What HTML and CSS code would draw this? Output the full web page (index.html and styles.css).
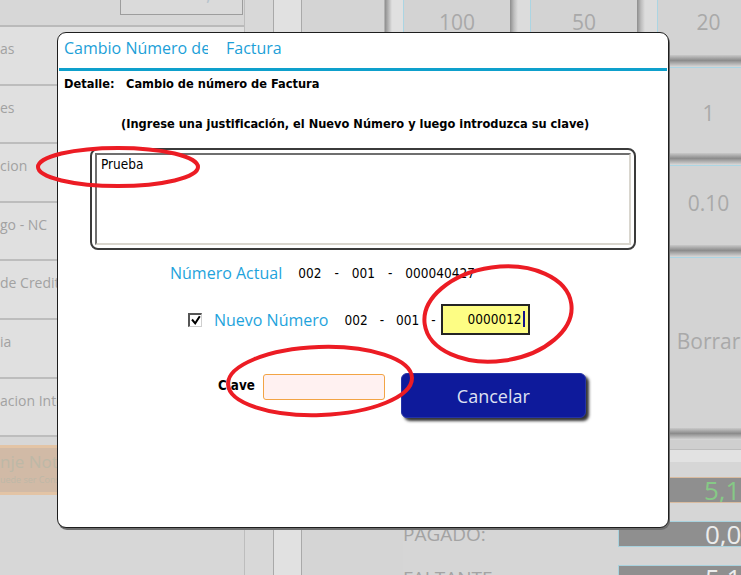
FILE: index.html
```html
<!DOCTYPE html>
<html lang="es">
<head>
  <meta charset="UTF-8" />
  <title>Cambio Número de Factura</title>
  <link rel="stylesheet" href="styles.css">
</head>
<body>
  <div class="app">
    <aside class="side">
      <div class="side-top"><div class="cash"><span>0,00</span></div></div>
      <div class="side-item">as</div>
      <div class="side-item">es</div>
      <div class="side-item">cion</div>
      <div class="side-item">go - NC</div>
      <div class="side-item">de Credito</div>
      <div class="side-item">ia</div>
      <div class="side-item">acion Interna</div>
      <div class="note-btn">
        <div class="note-big">nje Nota</div>
        <div class="note-small">uede ser Consumida</div>
      </div>
    </aside>
    <div class="gap-col"></div>
    <div class="strip"></div>
    <div class="mid"><div class="mid-top"></div></div>

    <section class="pad">
      <div class="keys">
        <div class="gutter g1"></div>
        <div class="gutter g2"></div>
        <div class="key r1 c1">100</div>
        <div class="key r1 c3">50</div>
        <div class="key r1 c5">20</div>
        <div class="key r2 c1"></div>
        <div class="key r2 c3"></div>
        <div class="key r2 c5">1</div>
        <div class="key r3 c1"></div>
        <div class="key r3 c3"></div>
        <div class="key r3 c5">0.10</div>
        <div class="key r4 c1"></div>
        <div class="key r4 c3"></div>
        <div class="key r4 c5">Borrar</div>
      </div>
      <div class="pad-band"></div>
      <div class="pad-light"></div>
      <div class="totals">
        <div class="tot-lbl"></div><div class="tot-box due">5,12</div>
        <div class="tot-lbl">PAGADO:</div><div class="tot-box">0,00</div>
        <div class="tot-lbl">FALTANTE</div><div class="tot-box">5,12</div>
      </div>
    </section>

    <!-- ventana modal -->
    <div class="dialog">
      <div class="dlg-title"><span class="t-clip">Cambio Número de</span><span class="t-rest">Factura</span></div>
      <div class="dlg-rule"></div>
      <div class="detail"><span class="detail-lab">Detalle:</span><span>Cambio de número de Factura</span></div>
      <p class="hint">(Ingrese una justificación, el Nuevo Número y luego introduzca su clave)</p>
      <div class="memo"><div class="memo-in">Prueba</div></div>

      <div class="num-row actual">
        <span class="lbl">Número Actual</span>
        <span>002</span><span>-</span><span>001</span><span>-</span><span>000040427</span>
      </div>

      <div class="num-row nuevo">
        <span class="chk"><svg width="11" height="11" viewBox="0 0 11 11"><path d="M2 4.5 5.2 8.3 9.8 1.2" fill="none" stroke="#000" stroke-width="2"/></svg></span>
        <span class="lbl">Nuevo Número</span>
        <span>002</span><span>-</span><span>001</span><span>-</span>
        <span class="num-input">0000012<i class="caret"></i></span>
      </div>

      <div class="clave-row">
        <span class="clave-lab">Clave</span>
        <span class="clave-input"></span>
        <button class="btn-cancel">Cancelar</button>
      </div>
    </div>

    <svg class="marks" width="741" height="575" viewBox="0 0 741 575">
      <g fill="none" stroke="#ec1c24" stroke-width="4">
        <ellipse cx="118" cy="167" rx="80" ry="19"/>
        <ellipse cx="498" cy="314" rx="74" ry="47" transform="rotate(-8 498 314)"/>
        <ellipse cx="320" cy="381" rx="92" ry="34" transform="rotate(-2 320 381)"/>
      </g>
    </svg>
  </div>
</body>
</html>
```

FILE: styles.css
```css
* { box-sizing: border-box; }
body { margin: 0; background: #d6d6d6; font-family: "Open Sans", sans-serif; }
.app { position: relative; width: 741px; height: 575px; overflow: hidden; display: grid; grid-template-columns: 245px 29px 28px 101px 338px; }

/* fondo: menu izquierdo */
.side { background: #d7d7d7; border-right: 1px solid #bdbdbd; }
.side-top { height: 27px; border-bottom: 2px solid #bababa; display: flex; justify-content: flex-end; padding-right: 1px; }
.cash { width: 123px; height: 15px; border: 1px solid #9d9d9d; border-top: 0; background: #dadada; overflow: hidden; text-align: right; padding-right: 8px; }
.cash span { display: block; font-size: 20px; line-height: 20px; margin-top: -17px; color: #b7c4cd; }
.side-item { height: 58.6px; border-bottom: 2px solid #bdbdbd; background: #e0e0e0; padding-top: 11px; font-size: 14px; line-height: 22px; color: #a2a2a2; white-space: nowrap; overflow: hidden; }
.note-btn { margin-top: 8px; height: 50px; border-top: 3px solid #e3c4a5; border-bottom: 3px solid #e3c4a5; background: #d1baa6; padding-top: 4px; color: #bdb8a6; white-space: nowrap; overflow: hidden; }
.note-big { font-size: 17px; line-height: 20px; }
.note-small { font-size: 9px; line-height: 10px; margin-top: 3px; }

.gap-col { background: #d8d8d8; border-right: 1px solid #a9a9a9; }
.strip { background: #e1e1e1; border-right: 1px solid #a9a9a9; }
.mid { background: #d5d5d5; }
.mid-top { height: 100px; background: linear-gradient(to right, #d4d4d4 0, #d4d4d4 82px, #8e8e8e 83px, #c8c8c8 88px, #e0e0e0 90px); }

/* teclado derecho */
.pad { background: #d6d6d6; }
.keys { display: grid; grid-template-columns: 107px 20px 107px 20px 102px; grid-template-rows: 67px 98px 92px 183px; }
.gutter { grid-row: 1 / -1; background: linear-gradient(to right, #8d8d8d, #bdbdbd 4px, #dcdcdc 8px, #dcdcdc); }
.g1 { grid-column: 2; }
.g2 { grid-column: 4; }
.c1 { grid-column: 1; }
.c3 { grid-column: 3; }
.c5 { grid-column: 5; }
.r1 { grid-row: 1; padding-bottom: 23px; }
.r2 { grid-row: 2; padding-bottom: 8px; border-top: 1px solid #abd5e3; }
.r3 { grid-row: 3; padding-bottom: 18px; border-top: 1px solid #abd5e3; }
.r4 { grid-row: 4; padding-bottom: 17px; border-top: 1px solid #abd5e3; }
.key { border-left: 1px solid #abd5e3; display: flex; align-items: center; justify-content: center; font-size: 21px; color: #a9a9a9;
  background: linear-gradient(#d3d3d3, #d3d3d3) top / 100% calc(100% - 12px) no-repeat,
              linear-gradient(#c9c9c9, #8b8b8b 45%, #bdbdbd 80%, #dadada) bottom / 100% 12px no-repeat; }
.pad-band { height: 10px; background: #cfcfcf; border-bottom: 1px solid #bdbdbd; }
.pad-light { height: 12px; background: #e2e2e2; }
.totals { display: grid; grid-template-columns: 215px 130px; row-gap: 18px; padding-top: 15px; }
.tot-lbl { font-size: 19px; line-height: 26px; color: #a3a3a3; }
.tot-box { height: 26px; background: #8f8f8f; border: 1px solid #a8d2de; font-size: 26px; line-height: 24px; color: #ececec; padding-left: 86px; white-space: nowrap; overflow: hidden; }
.tot-box.due { border-color: #d9bb9f; border-left: 0; border-right: 0; color: #86c986; }

/* ventana modal */
.dialog { position: absolute; left: 57px; top: 32px; width: 612px; height: 496px; background: #fff; border: 1px solid #1e1e1e; border-radius: 9px; box-shadow: 1px 2px 0 #6e6e6e; }
.dlg-title { display: flex; padding: 4px 6px 9px; font-size: 16px; line-height: 22px; color: #1c9fd8; white-space: nowrap; }
.t-clip { width: 144px; overflow: hidden; }
.t-rest { margin-left: 18px; }
.dlg-rule { height: 3px; margin: 0 1px; background: #0ea0cc; }
.detail, .hint, .clave-lab { font-family: "DejaVu Sans Condensed", "DejaVu Sans", sans-serif; font-weight: bold; font-size: 12.7px; line-height: 14px; color: #000; }
.detail { margin-top: 6px; padding-left: 6px; }
.detail-lab { display: inline-block; width: 62px; }
.hint { margin: 26px 0 0; padding-left: 63px; }
.memo { margin: 17px 0 0 32px; width: 546px; height: 102px; border: 2px solid #3b3b3b; border-radius: 8px; padding: 3px; }
.memo-in { height: 100%; border: 2px solid; border-color: #6f6f6f #d9d6ce #d9d6ce #6f6f6f; padding: 2px 4px; font-family: "DejaVu Sans Condensed", "DejaVu Sans", sans-serif; font-size: 13.5px; line-height: 15px; }

.num-row { display: flex; align-items: center; column-gap: 13px; font-family: "DejaVu Sans Condensed", "DejaVu Sans", sans-serif; font-size: 13.5px; color: #000; }
.lbl { font-family: "Open Sans", sans-serif; font-size: 16px; line-height: 22px; color: #1ea3dc; }
.actual { margin-top: 12px; padding-left: 112px; height: 22px; }
.actual .lbl { margin-right: 3px; }
.nuevo { margin-top: 20px; padding-left: 130px; height: 31px; column-gap: 12px; }
.nuevo .lbl { margin-right: 4px; }
.chk { width: 14px; height: 14px; border-style: solid; border-width: 2px 1px 1px 2px; border-color: #555 #cfcfcf #cfcfcf #555; background: #fff; display: flex; }
.num-input { margin-left: -7px; width: 89px; height: 31px; border: 2px solid #242424; background: #fdfd84; text-align: right; padding-right: 3px; line-height: 27px; }
.caret { display: inline-block; width: 2px; height: 16px; margin-left: 1px; vertical-align: -3px; background: #14148c; }

.clave-row { margin-top: 38px; padding-left: 160px; display: flex; align-items: flex-start; }
.clave-lab { font-size: 13.3px; margin-top: 6px; margin-right: 8px; }
.clave-input { width: 122px; height: 26px; margin-top: 1px; border: 1px solid #f2a445; border-radius: 3px; background: #fff1f1; }
.btn-cancel { margin-left: 16px; width: 185px; height: 45px; padding: 0; border-radius: 6px; background: #0e1a9b; border: 1px solid #2533a6; color: #dfe1f2; font-family: "Open Sans", sans-serif; font-size: 18px; line-height: 24px; box-shadow: 3px 3px 3px rgba(0, 0, 0, 0.8); }

.marks { position: absolute; left: 0; top: 0; pointer-events: none; }
```
